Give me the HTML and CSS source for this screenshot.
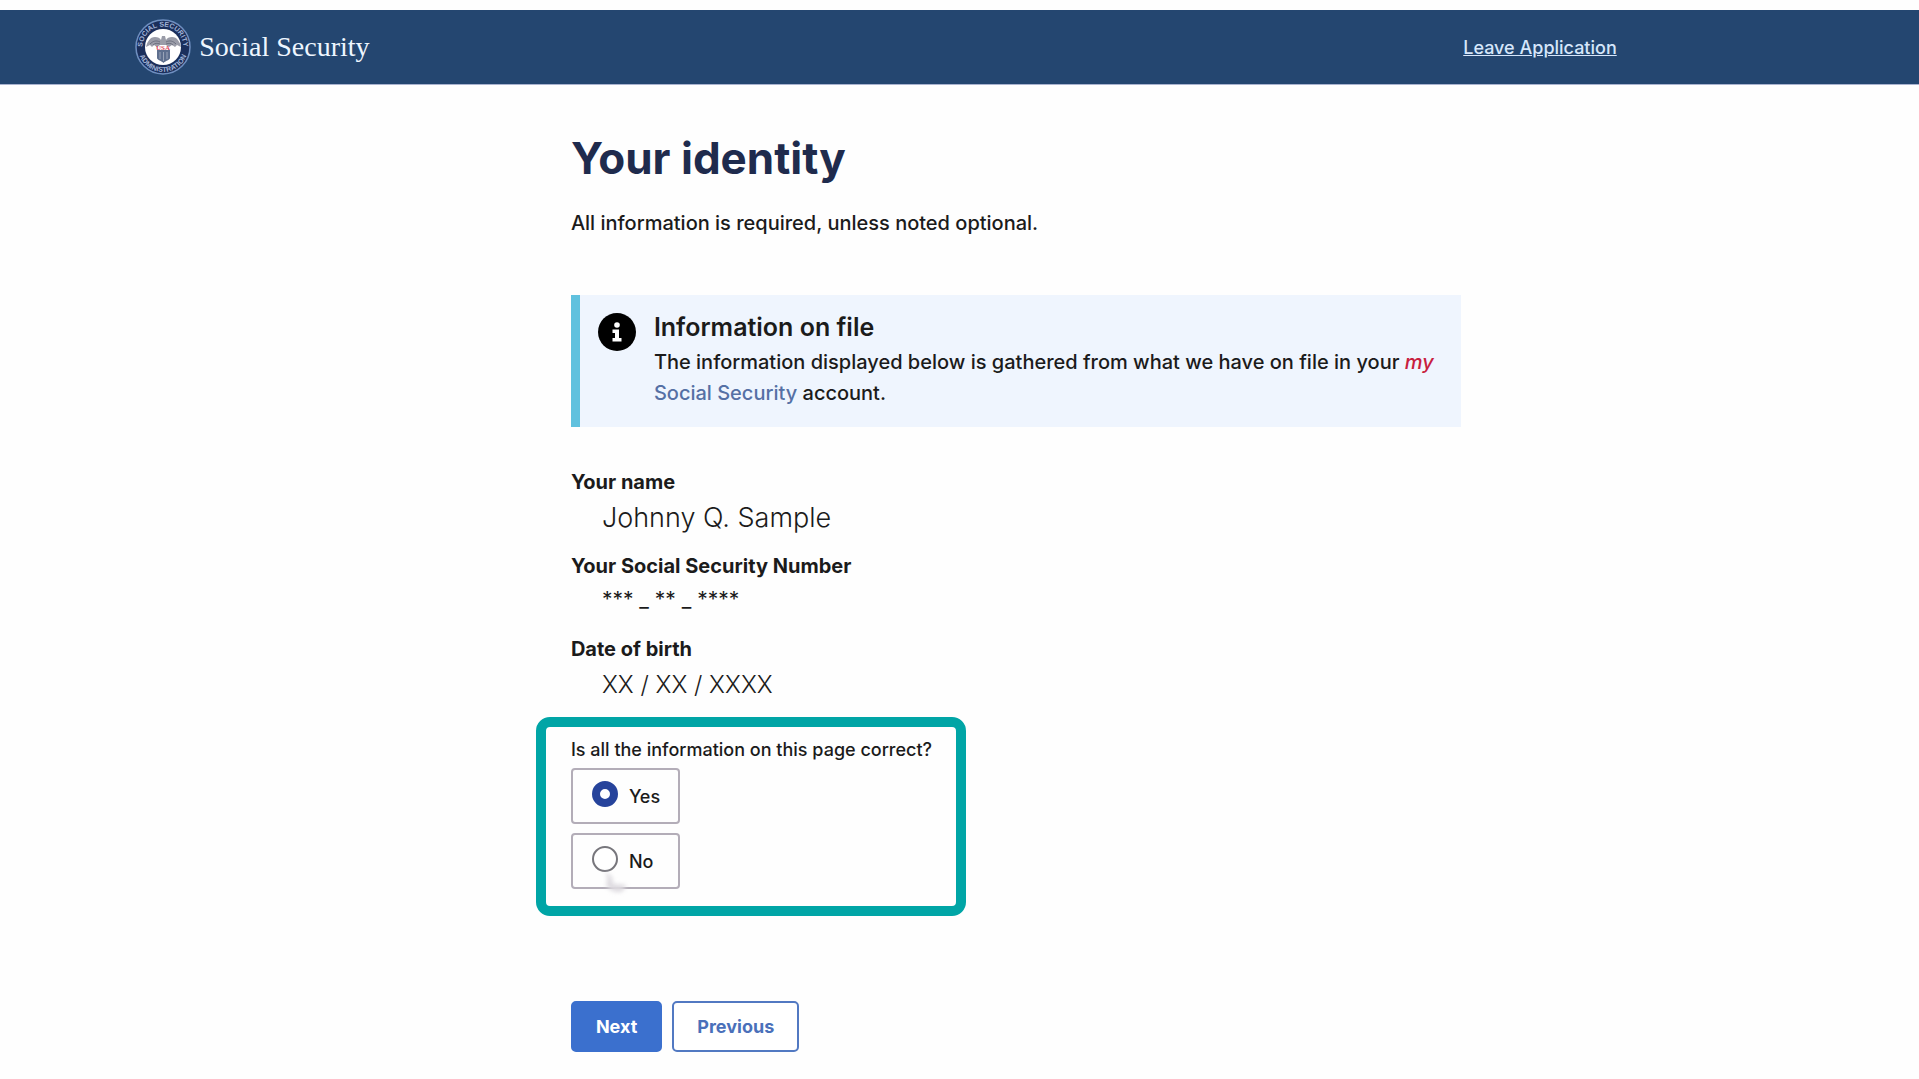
FILE: index.html
```html
<!DOCTYPE html>
<html lang="en">

<head>
    <meta charset="UTF-8">
    <title>Your identity - Social Security</title>
    <link rel="stylesheet" href="styles.css">
</head>

<body>
    <header class="header">
        <div class="container">
            <div class="logo">
                <svg width="56" height="56" viewBox="0 0 56 56" aria-hidden="true">
                    <defs>
                        <path id="arcTop" d="M7.500 28a20.500 20.500 0 0 1 41 0" />
                        <path id="arcBottom" d="M3 28a25 25 0 0 0 50 0" />
                    </defs>
                    <circle cx="28" cy="28" r="27" fill="#1b2f5c" stroke="#6f8fc0" stroke-width="1.5" />
                    <circle cx="28" cy="28" r="18" fill="#fff" />
                    <g class="seal-text">
                        <text><textPath href="#arcTop" startOffset="50%">SOCIAL SECURITY</textPath></text>
                        <text><textPath href="#arcBottom" startOffset="50%">ADMINISTRATION</textPath></text>
                    </g>
                    <!-- eagle -->
                    <path d="M11 28c1-5 4-10 9-10 3 0 5 1 6 3l1-4h3l1 4c1-2 3-3 6-3 5 0 8 5 9 10l-4-2-2 2-3-2-3 2-3-2H25l-3 2-3-2-2 2-2-2z" fill="#9a9ca8" />
                    <path d="M15 25c3-3 6-4 10-2M18 26c2-2 4-2 7-1M41 25c-3-3-6-4-10-2M38 26c-2-2-4-2-7-1" fill="none" stroke="#5f6475" stroke-width=".8" />
                    <path d="M22 31h13v8c0 2-5 3-6.500 5-1.500-2-6.500-3-6.500-5z" fill="#5e6f8e" />
                    <path d="M25 33v7M28.500 33v9M32 33v7" stroke="#9aa4b8" />
                    <text class="seal-usa" x="28" y="31">USA</text>
                </svg>
                <span>Social Security</span>
            </div>
            <a class="leave" href="#">Leave Application</a>
        </div>
    </header>

    <main class="main">
        <h1>Your identity</h1>
        <p class="intro">All information is required, unless noted optional.</p>

        <div class="alert">
            <svg width="38" height="38" viewBox="0 0 38 38" aria-hidden="true">
                <circle cx="19" cy="19" r="19" />
                <circle cx="19" cy="12" r="2.800" fill="#fff" />
                <path d="M14.500 16.500h6.500v8.500h2.500v3.500h-9v-3.500h2.500v-5h-2.500z" fill="#fff" />
            </svg>
            <div>
                <h2>Information on file</h2>
                <p>The information displayed below is gathered from what we have on file in your <em>my</em> <span class="ss">Social Security</span> account.</p>
            </div>
        </div>

        <dl class="info">
            <dt>Your name</dt>
            <dd class="name">Johnny Q. Sample</dd>
            <dt>Your Social Security Number</dt>
            <dd class="ssn">*** _ ** _ ****</dd>
            <dt>Date of birth</dt>
            <dd>XX / XX / XXXX</dd>
        </dl>

        <form>
            <fieldset class="question">
                <legend>Is all the information on this page correct?</legend>
                <label class="option" for="yes">
                    <input type="radio" name="correct" id="yes" checked>
                    <span>Yes</span>
                </label>
                <label class="option" for="no">
                    <input type="radio" name="correct" id="no">
                    <span>No</span>
                    <svg class="pointer-shadow" width="32" height="28" viewBox="0 0 32 28" aria-hidden="true">
                        <path d="M4 2l7 6 1 7 13 1c-1 5-5 8-9 7-6-1-10-4-11-8 3-3 1-8-1-13z" />
                    </svg>
                </label>
            </fieldset>
            <div class="buttons">
                <button type="button" class="btn btn-next">Next</button>
                <button type="button" class="btn">Previous</button>
            </div>
        </form>
    </main>
</body>

</html>
```
FILE: styles.css
```css
* {
    box-sizing: border-box;
}

body {
    margin: 0;
    padding-top: 10px;
    background: #fefefe;
    color: #1b1b1b;
    font-family: Inter, "Open Sans", sans-serif;
    font-size: 20px;
    font-weight: 500;
}

h1,
h2,
p,
dl,
dd {
    margin: 0;
}

.header {
    background: #244670;
    border-bottom: 1px solid #a9b3cf;
}

.container {
    display: flex;
    align-items: center;
    justify-content: space-between;
    width: 77.2%;
    height: 74px;
    margin-left: 7.05%;
}

.logo {
    display: flex;
    align-items: center;
    gap: 8px;
    color: #eef6ff;
    font-family: "Liberation Serif", serif;
    font-size: 28px;
}

.seal-text {
    fill: #a3b5d8;
    font-family: "Liberation Sans", sans-serif;
    font-size: 7px;
    font-weight: bold;
    text-anchor: middle;
}

.seal-usa {
    fill: #d8475c;
    font-size: 7px;
    font-weight: bold;
    text-anchor: middle;
}

.leave {
    color: #d6e6fb;
    font-size: 18px;
}

.main {
    width: 890px;
    max-width: 70%;
    margin-left: 29.75%;
    padding: 42px 0 24px;
}

h1 {
    color: #1f2b4d;
    font-size: 44px;
    line-height: 62px;
}

.intro {
    margin-top: 18px;
    line-height: 32px;
}

.alert {
    display: flex;
    gap: 18px;
    margin-top: 56px;
    padding: 14px 8px 18px 18px;
    border-left: 9px solid #60c1de;
    background: #eff5fe;
    line-height: 31px;
}

.alert svg {
    flex: none;
    margin-top: 4px;
}

.alert h2 {
    margin-bottom: 2px;
    font-size: 25px;
    font-weight: 600;
    line-height: 36px;
}

.alert em {
    color: #c8203f;
}

.ss {
    color: #5570a5;
}

.info {
    margin-top: 39px;
}

.info dt {
    font-weight: bold;
    line-height: 32px;
}

.info dd {
    height: 36px;
    margin: 0 0 16px 31px;
    font-size: 24px;
    font-weight: 300;
    line-height: 40px;
}

.info .name {
    font-size: 27px;
}

.info .ssn {
    height: 35px;
    font-size: 21px;
    font-weight: 400;
    line-height: 36px;
}

.question {
    width: 430px;
    margin: 14px 0 0 -35px;
    padding: 9px 20px 17px 25px;
    border: 10px solid #00a5a6;
    border-radius: 14px;
}

.question legend {
    float: left;
    width: 100%;
    margin-bottom: 4px;
    padding: 0;
    font-size: 18px;
    line-height: 28px;
}

.option {
    position: relative;
    display: flex;
    clear: both;
    align-items: center;
    gap: 11px;
    width: 109px;
    height: 56px;
    margin-top: 9px;
    padding-left: 19px;
    border: 2px solid #b3adb8;
    border-radius: 4px;
    font-size: 18px;
}

.option input {
    width: 26px;
    height: 26px;
    margin: 0 0 4px;
    border: 2px solid #77767c;
    border-radius: 50%;
    background: #fff;
    appearance: none;
}

.option input:checked {
    border: 8px solid #26439b;
}

.pointer-shadow {
    position: absolute;
    bottom: -10px;
    left: 28px;
    fill: #dddadf;
    filter: blur(2px);
}

.buttons {
    display: flex;
    gap: 10px;
    margin-top: 85px;
}

.btn {
    height: 51px;
    padding: 0 23px;
    border: 2px solid #5279c2;
    border-radius: 5px;
    background: #fff;
    color: #4a70ba;
    font-family: inherit;
    font-size: 18px;
    font-weight: bold;
}

.btn-next {
    border-color: #3b70ce;
    background: #3b70ce;
    color: #fff;
}
```
